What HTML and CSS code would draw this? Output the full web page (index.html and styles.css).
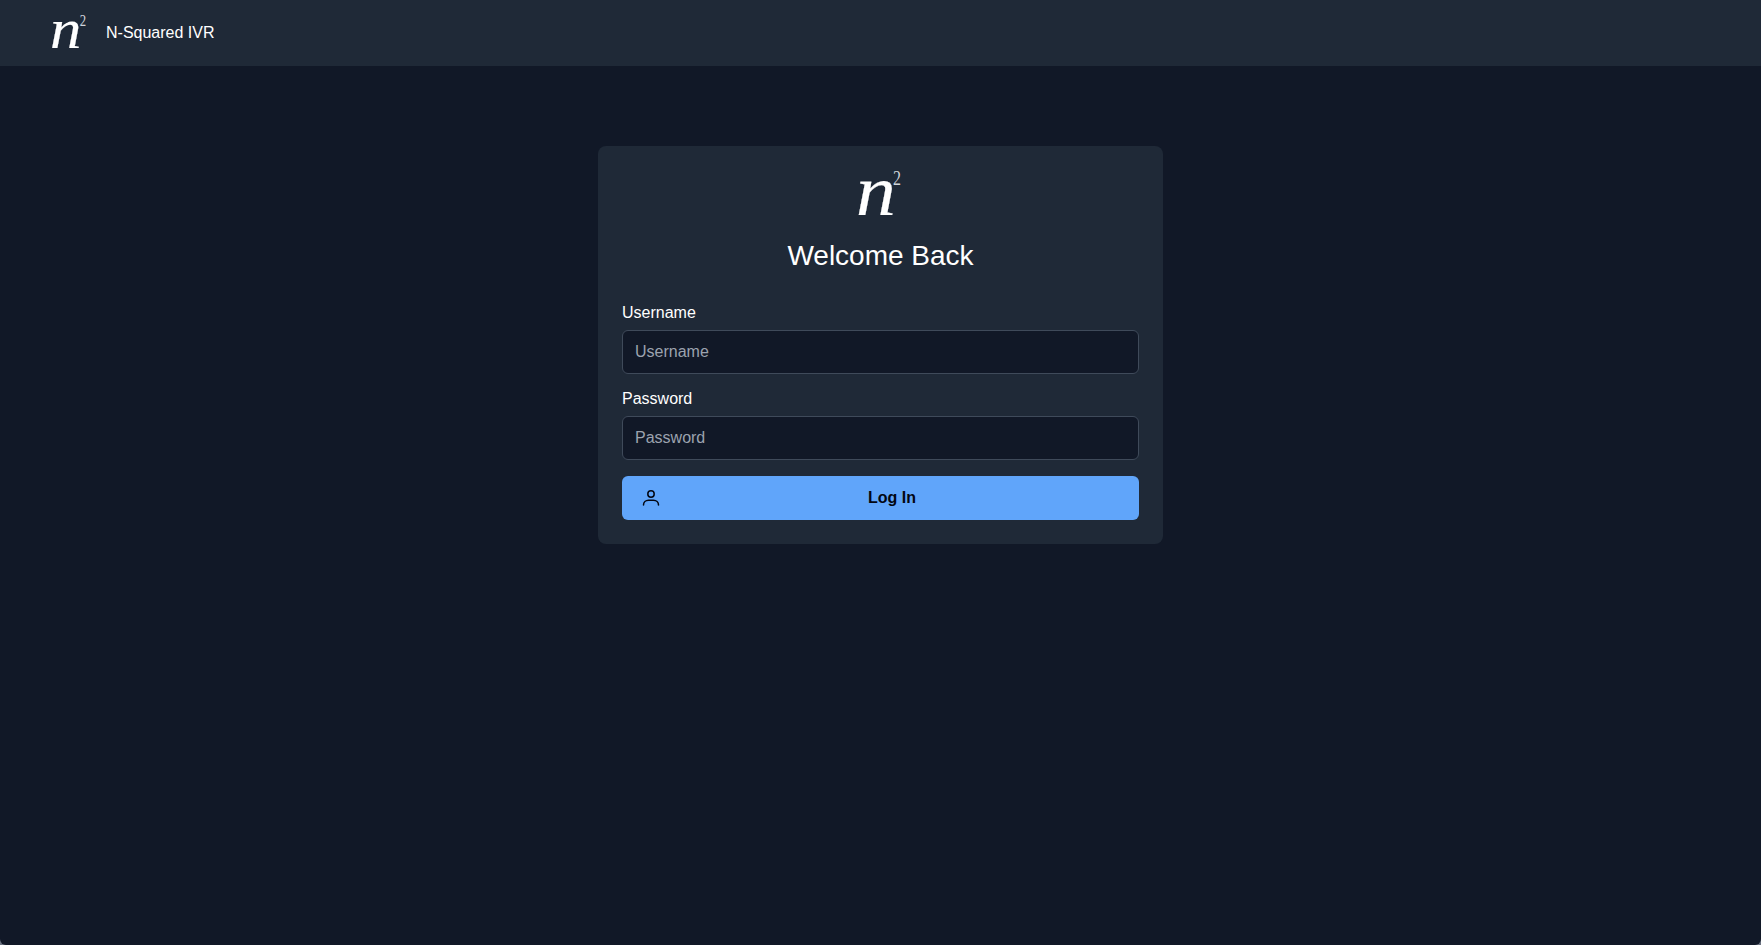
FILE: index.html
```html
<!DOCTYPE html>
<html lang="en">
<head>
<meta charset="utf-8">
<title>N-Squared IVR</title>
<link rel="stylesheet" href="styles.css">
</head>
<body>
<header class="topbar">
  <div class="logo logo-small"><span class="logo-n">n</span><span class="logo-exp">2</span></div>
  <span class="brand">N-Squared IVR</span>
</header>
<main class="main">
  <form class="card">
    <div class="logo logo-large"><span class="logo-n">n</span><span class="logo-exp">2</span></div>
    <h1 class="title">Welcome Back</h1>
    <div class="field">
      <label class="label" for="username">Username</label>
      <input class="input" id="username" type="text" placeholder="Username">
    </div>
    <div class="field">
      <label class="label" for="password">Password</label>
      <input class="input" id="password" type="password" placeholder="Password">
    </div>
    <button class="button" type="button">
      <svg class="button-icon" viewBox="0 0 20 20" fill="none" stroke="currentColor" stroke-width="1.5" stroke-linecap="round" stroke-linejoin="round"><circle cx="10" cy="6" r="3.200"/><path d="M2.500 17c0-2.800 2.200-4.800 5-4.800h5c2.800 0 5 2 5 4.800"/></svg>
      <span class="button-text">Log In</span>
    </button>
  </form>
</main>
</body>
</html>
```

FILE: styles.css
```css
* { box-sizing: border-box; }
html { height: 100%; background: #6b7280; }
body {
  height: 100%;
  margin: 0;
  background: #111827;
  color: #fff;
  font-family: "Liberation Sans", Arial, sans-serif;
  display: flex;
  flex-direction: column;
  border-radius: 0 0 6px 6px;
}
.topbar {
  height: 66px;
  flex: none;
  background: #1f2937;
  display: flex;
  align-items: center;
  padding-left: 50px;
  gap: 19px;
}
.brand { font-size: 16px; line-height: 24px; }
.logo {
  font-family: "Liberation Serif", "Times New Roman", serif;
  font-style: italic;
  color: #fff;
  display: flex;
  align-items: flex-start;
}
.logo-n {
  display: block;
  -webkit-text-stroke: 0.2px #fff;
  transform-origin: left bottom;
  transform: scaleX(1.12);
}
.logo-exp { display: block; color: #d1d5db; font-style: normal; transform: scaleX(0.8); }
.logo-small { width: 37px; height: 44px; }
.logo-small .logo-n { font-size: 56px; line-height: 36px; }
.logo-small .logo-exp { font-size: 16px; line-height: 14px; margin: 3px 0 0 1px; }
.logo-large { height: 50px; align-self: center; }
.logo-large .logo-n { font-size: 71px; line-height: 42px; margin-left: -3px; }
.logo-large .logo-exp { font-size: 20px; line-height: 16px; margin: 0 0 0 1px; }
.main {
  flex: 1;
  display: flex;
  justify-content: center;
  align-items: flex-start;
  padding-top: 80px;
}
.card {
  width: 565px;
  background: #1f2937;
  border-radius: 8px;
  padding: 24px;
  display: flex;
  flex-direction: column;
}
.title {
  margin: 18px 0 27px;
  font-size: 28px;
  line-height: 36px;
  font-weight: 400;
  text-align: center;
}
.field { display: flex; flex-direction: column; margin-bottom: 13px; }
.label { font-size: 16px; line-height: 24px; margin-bottom: 5px; }
.input {
  height: 44px;
  padding: 0 12px;
  font: 16px "Liberation Sans", Arial, sans-serif;
  color: #fff;
  background: #111827;
  border: 1px solid #3f4a5a;
  border-radius: 6px;
  outline: none;
}
.input::placeholder { color: #9ca3af; opacity: 1; }
.button {
  height: 44px;
  margin-top: 3px;
  padding: 0 16px 0 19px;
  display: flex;
  align-items: center;
  background: #60a5fa;
  color: #030712;
  border: 0;
  border-radius: 6px;
  font: 700 16px "Liberation Sans", Arial, sans-serif;
}
.button-icon { width: 20px; height: 20px; flex: none; }
.button-text { flex: 1; text-align: center; }
```
